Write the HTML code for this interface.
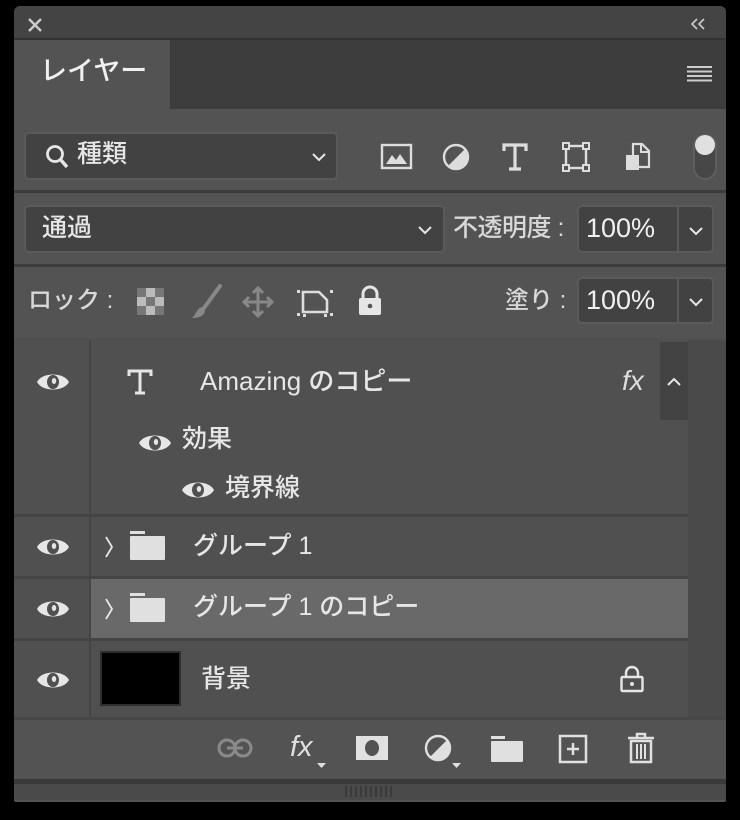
<!DOCTYPE html>
<html><head><meta charset="utf-8"><style>
*{margin:0;padding:0;box-sizing:border-box}
body{width:740px;height:820px;background:#000;position:relative;overflow:hidden;font-family:"Liberation Sans","Noto Sans CJK JP",sans-serif;color:#e6e6e6}
.a{position:absolute}
.box{position:absolute;background:#424242;border:2px solid #5a5a5a;border-radius:5px}
.t{position:absolute;white-space:nowrap;font-size:23px;line-height:1;font-weight:500}
.hr{position:absolute;height:3px;background:#3c3c3c;left:14px;width:712px}
svg{position:absolute;overflow:visible}
</style></head><body>
<div class="a" style="left:14px;top:6px;width:712px;height:796px;background:#535353;border-radius:6px 6px 2px 2px"></div>
<div class="a" style="left:14px;top:6px;width:712px;height:34px;background:#444;border-radius:6px 6px 0 0"></div>
<svg style="left:27px;top:17px" width="16" height="16"><path d="M2 2L14 14M14 2L2 14" stroke="#ccc" stroke-width="2.4"/></svg>
<svg style="left:690px;top:18px" width="18" height="12"><path d="M7 1L2 6L7 11M14 1L9 6L14 11" stroke="#ccc" stroke-width="1.6" fill="none"/></svg>
<div class="a" style="left:170px;top:40px;width:556px;height:69px;background:#3d3d3d"></div>
<div class="a" style="left:14px;top:38px;width:712px;height:2px;background:#333"></div>
<div class="t" style="left:40px;top:58px;font-size:27px;color:#f0f0f0">レイヤー</div>
<svg style="left:687px;top:66px" width="26" height="16"><path d="M0 1H25M0 5.5H25M0 10H25M0 14.5H25" stroke="#ccc" stroke-width="2"/></svg>
<div class="box" style="left:24px;top:132px;width:314px;height:48px"></div>
<svg style="left:45px;top:144px" width="28" height="26"><circle cx="10" cy="10" r="7.5" stroke="#e6e6e6" stroke-width="2.8" fill="none"/><path d="M15 15L22 23" stroke="#e6e6e6" stroke-width="3.5"/></svg>
<div class="t" style="left:77px;top:142px;font-size:25px">種類</div>
<svg style="left:312px;top:152px" width="14" height="10"><path d="M1 2L7 8L13 2" stroke="#e6e6e6" stroke-width="2" fill="none"/></svg>
<svg style="left:381px;top:143px" width="32" height="28"><rect x="1" y="2" width="29" height="23" stroke="#ddd" stroke-width="2.4" fill="none"/><path d="M5 21L11 12L15 17L19 11L26 21Z" fill="#ddd"/></svg>
<svg style="left:442px;top:143px" width="28" height="28"><circle cx="14" cy="14" r="12" stroke="#ddd" stroke-width="2.4" fill="none"/><path d="M23 6A12 12 0 0 1 6 23Z" fill="#ddd"/></svg>
<svg style="left:502px;top:143px" width="26" height="28"><path d="M2 8V2H24V8M13 2V26M7 26H19" stroke="#ddd" stroke-width="3.2" fill="none"/></svg>
<svg style="left:562px;top:142px" width="28" height="30"><rect x="4" y="4" width="20" height="22" stroke="#ddd" stroke-width="2.4" fill="none"/><g fill="#535353" stroke="#ddd" stroke-width="2"><rect x="1" y="1" width="6" height="6"/><rect x="21" y="1" width="6" height="6"/><rect x="1" y="23" width="6" height="6"/><rect x="21" y="23" width="6" height="6"/></g></svg>
<svg style="left:625px;top:142px" width="26" height="30"><path d="M8 2H17L24 9V25H8Z" stroke="#ddd" stroke-width="2.2" fill="none"/><path d="M16 2V10H24" stroke="#ddd" stroke-width="2" fill="none"/><rect x="1" y="13" width="13" height="15" fill="#ddd"/></svg>
<div class="a" style="left:693px;top:134px;width:24px;height:46px;border:2px solid #5e5e5e;border-radius:12px;background:#474747"></div>
<div class="a" style="left:695px;top:135px;width:20px;height:20px;border-radius:50%;background:#e0e0e0"></div>
<div class="hr" style="top:190px"></div>
<div class="box" style="left:24px;top:205px;width:421px;height:48px"></div>
<div class="t" style="left:42px;top:216px;font-size:25px">通過</div>
<svg style="left:418px;top:225px" width="14" height="10"><path d="M1 2L7 8L13 2" stroke="#e6e6e6" stroke-width="2" fill="none"/></svg>
<div class="t" style="left:453px;top:216px;font-size:25px;color:#d8d8d8;letter-spacing:-0.5px">不透明度 :</div>
<div class="box" style="left:577px;top:205px;width:137px;height:48px"></div>
<div class="a" style="left:677px;top:207px;width:2px;height:44px;background:#5a5a5a"></div>
<div class="t" style="left:586px;top:215px;font-size:27px;color:#f0f0f0">100%</div>
<svg style="left:689px;top:226px" width="14" height="10"><path d="M1 2L7 8L13 2" stroke="#e6e6e6" stroke-width="2" fill="none"/></svg>
<div class="hr" style="top:264px"></div>
<div class="t" style="left:28px;top:289px;font-size:24px;color:#d8d8d8">ロック :</div>
<svg style="left:137px;top:288px" width="28" height="28"><rect x="0" y="0" width="27" height="27" fill="#bbb"/><g fill="#777"><rect x="0" y="0" width="9" height="9"/><rect x="18" y="0" width="9" height="9"/><rect x="9" y="9" width="9" height="9"/><rect x="0" y="18" width="9" height="9"/><rect x="18" y="18" width="9" height="9"/></g></svg>
<svg style="left:190px;top:284px" width="34" height="36"><path d="M30 2L14 24" stroke="#888" stroke-width="4" stroke-linecap="round"/><path d="M12 23C6 25 6 31 2 34C9 34 15 32 15 26Z" fill="#888"/></svg>
<svg style="left:242px;top:286px" width="32" height="32"><path d="M16 2V30M2 16H30" stroke="#888" stroke-width="3"/><path d="M11 7L16 2L21 7M11 25L16 30L21 25M7 11L2 16L7 21M25 11L30 16L25 21" stroke="#888" stroke-width="3" fill="none"/></svg>
<svg style="left:297px;top:287px" width="36" height="30"><path d="M6 5H22L30 13V25H6Z" stroke="#ddd" stroke-width="2.6" fill="none"/><g fill="#ddd"><rect x="0" y="3" width="3" height="3"/><rect x="33" y="3" width="3" height="3"/><rect x="0" y="26" width="3" height="3"/><rect x="33" y="26" width="3" height="3"/><rect x="6" y="27" width="3" height="3"/><rect x="27" y="27" width="3" height="3"/></g></svg>
<svg style="left:357px;top:285px" width="26" height="32"><path d="M6 14V9A7 7 0 0 1 20 9V14" stroke="#e6e6e6" stroke-width="3" fill="none"/><rect x="2" y="13" width="22" height="17" rx="2" fill="#e6e6e6"/><circle cx="13" cy="21" r="2.3" fill="#535353"/></svg>
<div class="t" style="left:505px;top:289px;font-size:24px;color:#d8d8d8">塗り :</div>
<div class="box" style="left:577px;top:277px;width:137px;height:47px"></div>
<div class="a" style="left:677px;top:279px;width:2px;height:43px;background:#5a5a5a"></div>
<div class="t" style="left:586px;top:287px;font-size:27px;color:#f0f0f0">100%</div>
<svg style="left:689px;top:297px" width="14" height="10"><path d="M1 2L7 8L13 2" stroke="#e6e6e6" stroke-width="2" fill="none"/></svg>
<div class="a" style="left:14px;top:338px;width:712px;height:380px;background:#505050"></div>
<div class="a" style="left:688px;top:340px;width:38px;height:378px;background:#4a4a4a"></div>
<div class="a" style="left:660px;top:342px;width:28px;height:78px;background:#434343"></div>
<div class="a" style="left:89px;top:340px;width:2px;height:378px;background:#454545"></div>
<div class="a" style="left:14px;top:514px;width:674px;height:3px;background:#444"></div>
<div class="a" style="left:14px;top:576px;width:674px;height:3px;background:#444"></div>
<div class="a" style="left:91px;top:579px;width:597px;height:59px;background:#696969"></div>
<div class="a" style="left:14px;top:638px;width:674px;height:3px;background:#444"></div>
<svg width="0" height="0"><defs><g id="eye"><path d="M0 0C5 -10 27 -10 32 0C27 10 5 10 0 0Z" fill="#e6e6e6"/><ellipse cx="16" cy="0" rx="6" ry="7" fill="#505050"/><ellipse cx="17" cy="-1" rx="2.2" ry="3" fill="#e6e6e6"/></g></defs></svg>
<svg style="left:37px;top:382px" width="32" height="1"><use href="#eye"/></svg>
<svg style="left:139px;top:443px" width="32" height="1"><use href="#eye"/></svg>
<svg style="left:182px;top:490px" width="32" height="1"><use href="#eye"/></svg>
<svg style="left:37px;top:547px" width="32" height="1"><use href="#eye"/></svg>
<svg style="left:37px;top:609px" width="32" height="1"><use href="#eye"/></svg>
<svg style="left:37px;top:680px" width="32" height="1"><use href="#eye"/></svg>
<svg style="left:127px;top:369px" width="26" height="26"><path d="M2 7V2H24V7M13 2V24M8 24H18" stroke="#e6e6e6" stroke-width="3" fill="none"/></svg>
<div class="t" style="left:200px;top:368px;font-size:26px">Amazing のコピー</div>
<div class="t" style="left:622px;top:367px;font-size:28px;font-style:italic;font-weight:400;color:#ddd">fx</div>
<svg style="left:667px;top:377px" width="14" height="10"><path d="M1 8L7 2L13 8" stroke="#e6e6e6" stroke-width="2" fill="none"/></svg>
<div class="t" style="left:182px;top:427px;font-size:25px">効果</div>
<div class="t" style="left:225px;top:476px;font-size:25px">境界線</div>
<svg style="left:104px;top:536px" width="10" height="22"><path d="M2 1L8 11L2 21" stroke="#e6e6e6" stroke-width="1.8" fill="none"/></svg>
<svg style="left:129px;top:530px" width="36" height="30"><rect x="1" y="1" width="15" height="3" fill="#e0e0e0"/><rect x="1" y="6" width="35" height="24" rx="1" fill="#e0e0e0"/></svg>
<div class="t" style="left:193px;top:534px;font-size:25px">グループ 1</div>
<svg style="left:104px;top:598px" width="10" height="22"><path d="M2 1L8 11L2 21" stroke="#e6e6e6" stroke-width="1.8" fill="none"/></svg>
<svg style="left:129px;top:592px" width="36" height="30"><rect x="1" y="1" width="15" height="3" fill="#e0e0e0"/><rect x="1" y="6" width="35" height="24" rx="1" fill="#e0e0e0"/></svg>
<div class="t" style="left:193px;top:595px;font-size:25px">グループ 1 のコピー</div>
<div class="a" style="left:100px;top:651px;width:81px;height:55px;background:#000;border:2px solid #2e2e2e"></div>
<div class="t" style="left:201px;top:667px;font-size:25px">背景</div>
<svg style="left:619px;top:665px" width="26" height="28"><path d="M7 12V8A6 6 0 0 1 19 8V12" stroke="#e6e6e6" stroke-width="2.4" fill="none"/><rect x="2.5" y="12" width="21" height="14" rx="1" stroke="#e6e6e6" stroke-width="2.4" fill="none"/><circle cx="13" cy="19" r="2" fill="#e6e6e6"/></svg>
<div class="a" style="left:14px;top:717px;width:712px;height:3px;background:#474747"></div>
<svg style="left:217px;top:738px" width="38" height="22"><rect x="2" y="2" width="16" height="16" rx="8" stroke="#8a8a8a" stroke-width="3" fill="none"/><rect x="18" y="2" width="16" height="16" rx="8" stroke="#8a8a8a" stroke-width="3" fill="none"/><path d="M10 10H26" stroke="#8a8a8a" stroke-width="3"/></svg>
<div class="t" style="left:290px;top:733px;font-size:29px;font-style:italic;font-weight:400;color:#e0e0e0">fx</div>
<svg style="left:317px;top:763px" width="10" height="6"><path d="M0 0H9L4.5 5Z" fill="#e0e0e0"/></svg>
<svg style="left:356px;top:736px" width="32" height="26"><rect x="0" y="0" width="32" height="24" fill="#e0e0e0"/><ellipse cx="16" cy="12" rx="7" ry="8" fill="#535353"/></svg>
<svg style="left:424px;top:734px" width="40" height="34"><circle cx="14" cy="14" r="12" stroke="#e0e0e0" stroke-width="2.4" fill="none"/><path d="M23 6A12 12 0 0 1 6 23Z" fill="#e0e0e0"/><path d="M28 29H37L32.5 34Z" fill="#e0e0e0"/></svg>
<svg style="left:490px;top:735px" width="34" height="28"><rect x="1" y="1" width="14" height="3" fill="#e0e0e0"/><rect x="1" y="6" width="32" height="21" rx="1" fill="#e0e0e0"/></svg>
<svg style="left:558px;top:734px" width="30" height="30"><rect x="2" y="2" width="26" height="26" stroke="#e0e0e0" stroke-width="2.5" fill="none"/><path d="M15 9V21M9 15H21" stroke="#e0e0e0" stroke-width="2.5"/></svg>
<svg style="left:627px;top:732px" width="28" height="32"><path d="M1 6H27M10 6V2H18V6" stroke="#e0e0e0" stroke-width="2.5" fill="none"/><path d="M4 9H24V30H4Z" stroke="#e0e0e0" stroke-width="2.5" fill="none"/><path d="M10 12V27M14 12V27M18 12V27" stroke="#e0e0e0" stroke-width="2"/></svg>
<div class="a" style="left:14px;top:779px;width:712px;height:5px;background:#3a3a3a"></div>
<div class="a" style="left:14px;top:784px;width:712px;height:16px;background:#4a4a4a"></div>
<div class="a" style="left:345px;top:786px;width:50px;height:11px;background:repeating-linear-gradient(90deg,#3a3a3a 0 2px,transparent 2px 5px)"></div>
</body></html>
